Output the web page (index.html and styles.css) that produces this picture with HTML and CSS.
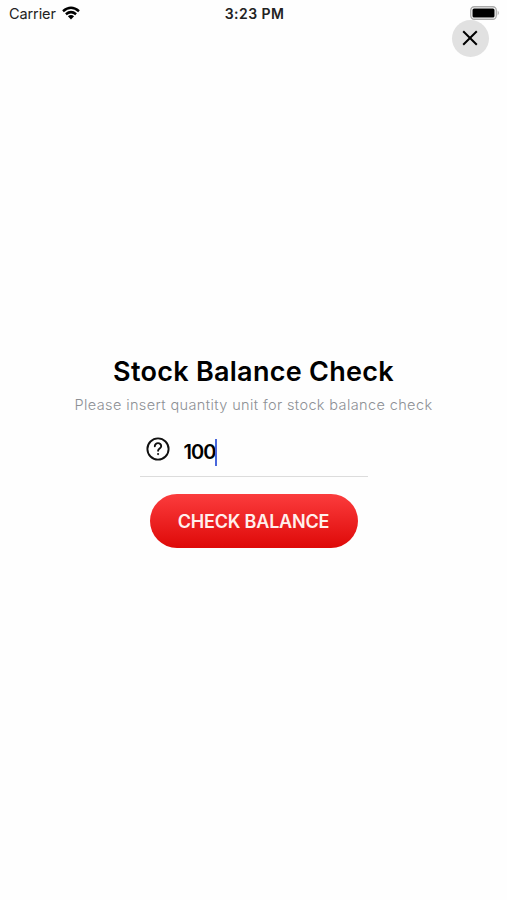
FILE: index.html
```html
<!DOCTYPE html>
<html lang="en">
<head>
<meta charset="utf-8">
<title>Stock Balance Check</title>
<link rel="stylesheet" href="styles.css">
</head>
<body>
<div class="screen">
  <header class="status">
    <div class="carrier"><span>Carrier</span>
      <svg class="wifi" width="18" height="14" viewBox="0 0 18 14" fill="none" stroke="#000" stroke-width="2.5"><path d="M1 5.2Q9-1.6 17 5.2M3.9 8.2Q9 4 14.1 8.2"/><path d="M5.9 10.3Q9 7.9 12.1 10.3L9 13.4Z" fill="#000" stroke="none"/></svg>
    </div>
    <time class="time">3:23 PM</time>
    <svg class="battery" width="30" height="14" viewBox="0 0 30 14"><rect x=".75" y=".75" width="25.5" height="12.5" rx="3.5" fill="#fff" stroke="#aaa" stroke-width="1.3"/><rect x="2.5" y="2.5" width="22" height="9" rx="1.5"/><path d="M27.7 4.6Q30 7 27.7 9.4Z" fill="#aaa"/></svg>
  </header>
  <button class="close" aria-label="Close"><svg width="16" height="16" viewBox="0 0 16 16" fill="none" stroke="#000" stroke-width="2"><path d="M1.2 1.2l13.6 13.6M14.8 1.2l-13.6 13.6"/></svg></button>
  <main class="content">
    <h1 class="title">Stock Balance Check</h1>
    <p class="subtitle">Please insert quantity unit for stock balance check</p>
    <div class="field">
      <svg class="help" width="24" height="24" viewBox="0 0 24 24" fill="none" stroke="#111" stroke-width="1.9" stroke-linecap="round"><circle cx="12" cy="12" r="10.6"/><path d="M8.8 9.3C8.8 5 15.3 5.3 15.2 9.2C15.1 11.4 12.1 11.6 12.1 13.8"/><circle cx="12.1" cy="17.1" r=".4" stroke-width="1.3"/></svg>
      <span class="value">100</span><i class="caret"></i>
    </div>
    <button class="submit">CHECK BALANCE</button>
  </main>
</div>
</body>
</html>
```
FILE: styles.css
```css
* { box-sizing: border-box; }
body { margin: 0; background: #fefefe; font-family: Inter, "Liberation Sans", sans-serif; }
.screen { height: 900px; overflow: hidden; display: flex; flex-direction: column; }
.status { position: relative; z-index: 1; height: 28px; flex: none; display: grid; grid-template-columns: 1fr auto 1fr; align-items: center; padding: 0 7px 0 9px; color: #222; }
.carrier { display: flex; align-items: center; gap: 6px; font-size: 14.5px; letter-spacing: -.1px; }
.carrier span { margin-top: -2px; }
.wifi { margin-top: -2px; }
.time { margin-top: -2px; font-size: 14px; font-weight: 600; letter-spacing: .45px; }
.battery { justify-self: end; margin-top: -2px; }
.close { width: 37px; height: 37px; flex: none; margin: -8px 18px 0 auto; padding: 0 1px 1px 0; border: 0; border-radius: 50%; background: #e1e1e1; display: flex; align-items: center; justify-content: center; }
.content { display: flex; flex-direction: column; align-items: center; padding-top: 297px; }
.title { margin: 0; height: 36px; line-height: 36px; font-size: 27px; font-weight: 600; letter-spacing: .28px; white-space: nowrap; color: #000; }
.subtitle { margin: 5px 0 0; height: 22px; line-height: 20px; font-size: 14.5px; font-weight: 300; letter-spacing: .38px; white-space: nowrap; color: #8d9095; }
.field { width: 228px; height: 60px; border-bottom: 1.5px solid #dcdcdc; display: flex; align-items: center; padding: 11px 0 0 6px; }
.help { margin-top: -6px; }
.value { margin-left: 14px; font-size: 20px; font-weight: 600; line-height: 24px; letter-spacing: -1px; width: 31px; }
.caret { width: 2px; height: 27px; background: #4867dc; }
.submit { width: 208px; height: 54px; margin: 17px 0 0; padding: 0; border: 0; border-radius: 27px; background: linear-gradient(#fb3c3d, #de0908); color: #fff0ed; font: 600 18px Inter, sans-serif; letter-spacing: -.2px; white-space: nowrap; }
```
